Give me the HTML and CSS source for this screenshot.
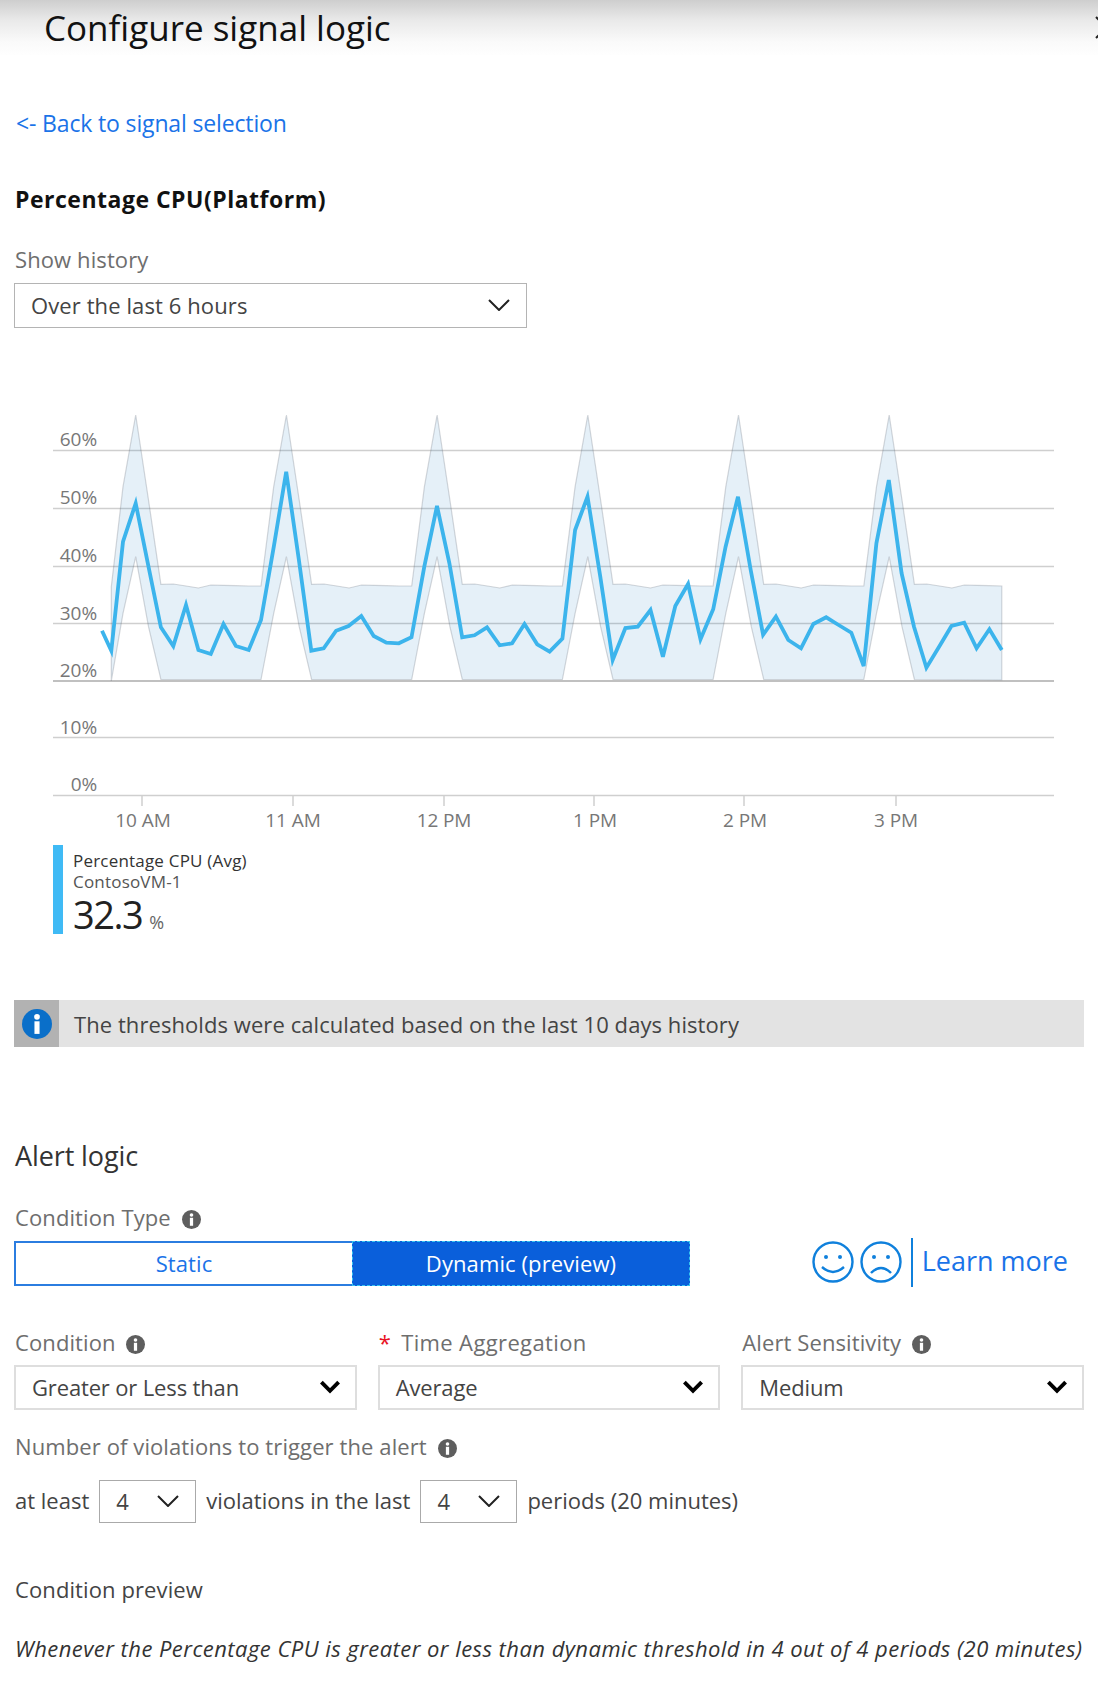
FILE: index.html
```html
<!DOCTYPE html>
<html lang="en">

<head>
    <meta charset="UTF-8">
    <meta name="viewport" content="width=device-width, initial-scale=1.0">
    <title>Configure signal logic</title>
    <link rel="stylesheet" href="styles.css">
</head>

<body>
    <svg class="icon-defs" width="0" height="0">
        <symbol id="info" viewBox="0 0 20 20">
            <circle cx="10" cy="10" r="10" fill="currentColor"></circle>
            <circle cx="10" cy="5.2" r="1.9" fill="#fff"></circle>
            <rect x="8.3" y="8.2" width="3.4" height="8.4" fill="#fff"></rect>
        </symbol>
        <symbol id="chev-thin" viewBox="0 0 22 12">
            <polyline points="1,1 11,11 21,1" fill="none" stroke="currentColor" stroke-width="2"></polyline>
        </symbol>
        <symbol id="chev-bold" viewBox="0 0 20 13">
            <polyline points="2,2 10,10 18,2" fill="none" stroke="currentColor" stroke-width="3.6"></polyline>
        </symbol>
    </svg>

    <header class="blade-header">
        <h1>Configure signal logic</h1>
        <svg class="close-icon" width="24" height="30" viewBox="0 0 24 30">
            <path d="M1 4 L22 25 M22 4 L1 25" stroke="#222" stroke-width="2"></path>
        </svg>
    </header>

    <main class="blade-body">
        <a class="back-link" href="#">&lt;- Back to signal selection</a>
        <h2 class="signal-name">Percentage CPU(Platform)</h2>

        <label class="field-label history-label">Show history</label>
        <div class="select history-select">
            <span>Over the last 6 hours</span>
            <svg class="chev-thin"><use href="#chev-thin"></use></svg>
        </div>

        <svg class="chart" width="1098" height="435" viewBox="0 400 1098 435">
            <g class="grid">
                <line x1="53" x2="1054" y1="450.5" y2="450.5"></line>
                <line x1="53" x2="1054" y1="508.5" y2="508.5"></line>
                <line x1="53" x2="1054" y1="566.5" y2="566.5"></line>
                <line x1="53" x2="1054" y1="623.5" y2="623.5"></line>
                <line x1="53" x2="1054" y1="681" y2="681" class="grid-strong"></line>
                <line x1="53" x2="1054" y1="737.5" y2="737.5"></line>
                <line x1="53" x2="1054" y1="795.5" y2="795.5"></line>
                <line x1="142" x2="142" y1="795" y2="806"></line>
                <line x1="293" x2="293" y1="795" y2="806"></line>
                <line x1="444" x2="444" y1="795" y2="806"></line>
                <line x1="594" x2="594" y1="795" y2="806"></line>
                <line x1="744" x2="744" y1="795" y2="806"></line>
                <line x1="896" x2="896" y1="795" y2="806"></line>
            </g>
            <polygon class="band" points="111.3,586.7 123,486.7 135.7,415 148.5,500 160.9,584.3 173.3,584 186,586 198.4,588 210.8,585 223.5,585.3 235.9,585.7 248.7,586 261,586
                273.7,486.7 286.4,415 299.2,500 311.6,584.3 324,584 336.7,586 349.1,588 361.5,585 374.2,585.3 386.6,585.7 399.4,586 411.7,586
                424.4,486.7 437.1,415 449.9,500 462.3,584.3 474.7,584 487.4,586 499.8,588 512.2,585 524.9,585.3 537.3,585.7 550.1,586 562.4,586
                575.1,486.7 587.8,415 600.6,500 613,584.3 625.4,584 638.1,586 650.5,588 662.9,585 675.6,585.3 688,585.7 700.8,586 713.1,586
                725.8,486.7 738.5,415 751.3,500 763.7,584.3 776.1,584 788.8,586 801.2,588 813.6,585 826.3,585.3 838.7,585.7 851.5,586 863.8,586
                876.5,486.7 889.2,415 902,500 914.4,584.3 926.8,584 939.5,586 951.9,588 964.3,585 977,585.3 989.4,585.7 1001.8,586
                1001.8,680 914.4,679.5 902,626.7 889.2,556.7 876.5,613.3 863.8,679.5
                763.7,679.5 751.3,626.7 738.5,556.7 725.8,613.3 713.1,679.5
                613,679.5 600.6,626.7 587.8,556.7 575.1,613.3 562.4,679.5
                462.3,679.5 449.9,626.7 437.1,556.7 424.4,613.3 411.7,679.5
                311.6,679.5 299.2,626.7 286.4,556.7 273.7,613.3 261,679.5
                160.9,679.5 148.5,626.7 135.7,556.7 123,613.3 111.3,681"></polygon>
            <polyline class="series" points="102,630.7 111.3,650.7 123,541.7 135.7,503.3 148.5,566.7 160.9,627.3 173.3,646 186,605 198.4,650 210.8,654 223.5,624 235.9,646 248.7,650 261,620 273.8,546.7 286.2,471.7 298.9,560 311.3,650.7 323.7,648.3 336.1,630.7 348.5,626 361.3,616 373.7,636 386.4,642.7 398.8,643.3 411.5,637.3 424.3,566.7 437,506 449.4,563.3 462.2,637.3 474.5,635.3 487,627.3 499.7,645.3 512.1,643.3 524.5,624 537.2,644.3 549.6,651.7 562.4,638.7 575.1,530 587.5,496.7 600.3,576.7 612.7,660 625.4,628 637.8,626.7 650.5,610 662.9,656.7 675.3,606 688.1,584 700.5,639.3 713.2,609.3 725.6,546.7 738,496.7 750.7,570 763.1,634.7 775.9,616.7 788.3,640 801,648.3 813.4,624 826.2,617.3 838.6,625 851.3,632.7 863.7,666 876.4,543.3 888.8,480 901.6,573.3 914,626.7 926.4,667.7 939.1,646.7 951.5,626 964.2,622.7 976.6,648.3 989.4,629.3 1001.8,650"></polyline>
            <g class="y-labels">
                <text x="97" y="446">60%</text>
                <text x="97" y="504">50%</text>
                <text x="97" y="562">40%</text>
                <text x="97" y="620">30%</text>
                <text x="97" y="677">20%</text>
                <text x="97" y="734">10%</text>
                <text x="97" y="791">0%</text>
            </g>
            <g class="x-labels">
                <text x="143" y="827">10 AM</text>
                <text x="293" y="827">11 AM</text>
                <text x="444" y="827">12 PM</text>
                <text x="595" y="827">1 PM</text>
                <text x="745" y="827">2 PM</text>
                <text x="896" y="827">3 PM</text>
            </g>
        </svg>

        <div class="legend">
            <div class="legend-bar"></div>
            <div class="legend-text">
                <div class="legend-name">Percentage CPU (Avg)</div>
                <div class="legend-resource">ContosoVM-1</div>
                <div class="legend-value">32.3<small>%</small></div>
            </div>
        </div>

        <div class="notice">
            <div class="notice-icon">
                <svg width="30" height="30"><use href="#info"></use></svg>
            </div>
            <span>The thresholds were calculated based on the last 10 days history</span>
        </div>

        <h3 class="section-title">Alert logic</h3>

        <label class="field-label type-label">Condition Type <svg class="info"><use href="#info"></use></svg></label>
        <div class="type-row">
            <div class="toggle">
                <div class="toggle-item">Static</div>
                <div class="toggle-item active">Dynamic (preview)</div>
            </div>
            <div class="feedback">
                <svg width="42" height="42" viewBox="0 0 42 42" class="face">
                    <circle cx="21" cy="21" r="19.5"></circle>
                    <circle cx="14" cy="16" r="2" class="eye"></circle>
                    <circle cx="28" cy="16" r="2" class="eye"></circle>
                    <path d="M10 26 Q21 36 32 26"></path>
                </svg>
                <svg width="42" height="42" viewBox="0 0 42 42" class="face">
                    <circle cx="21" cy="21" r="19.5"></circle>
                    <circle cx="14" cy="16" r="2" class="eye"></circle>
                    <circle cx="28" cy="16" r="2" class="eye"></circle>
                    <path d="M11 32 Q21 22 31 32"></path>
                </svg>
                <a class="learn-more" href="#">Learn more</a>
            </div>
        </div>

        <div class="fields">
            <div>
                <label class="field-label">Condition <svg class="info"><use href="#info"></use></svg></label>
                <div class="select select-light">
                    <span>Greater or Less than</span>
                    <svg class="chev-bold"><use href="#chev-bold"></use></svg>
                </div>
            </div>
            <div>
                <label class="field-label time-label"><span class="required">*</span>Time Aggregation</label>
                <div class="select select-light">
                    <span>Average</span>
                    <svg class="chev-bold"><use href="#chev-bold"></use></svg>
                </div>
            </div>
            <div>
                <label class="field-label">Alert Sensitivity <svg class="info"><use href="#info"></use></svg></label>
                <div class="select select-light">
                    <span>Medium</span>
                    <svg class="chev-bold"><use href="#chev-bold"></use></svg>
                </div>
            </div>
        </div>

        <label class="field-label violations-label">Number of violations to trigger the alert <svg class="info"><use href="#info"></use></svg></label>
        <div class="violations-row">
            <span>at least</span>
            <div class="select select-small">
                <span>4</span>
                <svg class="chev-thin"><use href="#chev-thin"></use></svg>
            </div>
            <span>violations in the last</span>
            <div class="select select-small">
                <span>4</span>
                <svg class="chev-thin"><use href="#chev-thin"></use></svg>
            </div>
            <span>periods (20 minutes)</span>
        </div>

        <div class="preview-title">Condition preview</div>
        <div class="preview-text">Whenever the Percentage CPU is greater or less than dynamic threshold in 4 out of 4 periods (20 minutes)</div>
    </main>
</body>

</html>
```

FILE: styles.css
```css
* {
    box-sizing: border-box;
}

body {
    margin: 0;
    height: 1686px;
    overflow: hidden;
    background: #fff;
    color: #333;
    font-family: "Open Sans", "Liberation Sans", sans-serif;
    font-size: 22px;
    letter-spacing: 0.1px;
}

.icon-defs {
    display: block;
    height: 0;
}

.blade-header {
    position: relative;
    height: 55px;
    padding-left: 44px;
    background: linear-gradient(#cecece, #e9e9e9 20px, #fafafa 42px, #fff 58px);
}

.blade-header h1 {
    margin: 0;
    font-size: 35px;
    font-weight: 400;
    line-height: 55px;
    color: #111;
    letter-spacing: 0;
}

.close-icon {
    position: absolute;
    top: 13px;
    right: -21px;
}

.blade-body {
    padding: 0 14px;
}

.back-link {
    display: block;
    margin: 53px 0 0 2px;
    font-size: 23px;
    line-height: 30px;
    color: #1a73e8;
    text-decoration: none;
    letter-spacing: -0.15px;
}

.signal-name {
    margin: 46px 0 0 1px;
    font-size: 23px;
    font-weight: 700;
    line-height: 30px;
    color: #111;
    letter-spacing: 0.5px;
}

.field-label {
    display: block;
    margin-left: 1px;
    line-height: 30px;
    color: #6e6e6e;
}

.history-label {
    margin-top: 30px;
}

.select {
    display: flex;
    align-items: center;
    justify-content: space-between;
    height: 45px;
    margin-top: 8px;
    padding: 0 16px 2px 16px;
    border: 1px solid #b4b4b4;
    color: #444;
}

.history-select {
    width: 513px;
    margin-top: 9px;
}

.chev-thin {
    width: 22px;
    height: 12px;
    color: #222;
}

.chev-bold {
    width: 22px;
    height: 14px;
    color: #000;
}

.select-light {
    border: 2px solid #dedede;
    padding-right: 14px;
    letter-spacing: -0.15px;
}

.select-small {
    width: 97px;
    height: 43px;
    margin-top: 0;
    border-color: #aaa;
}

.chart {
    display: block;
    margin: 72px 0 0 -14px;
}

.chart text {
    font-size: 19px;
    fill: #777;
    letter-spacing: -0.1px;
}

.grid line {
    stroke: #cfcfcf;
    stroke-width: 1.5;
}

.grid .grid-strong {
    stroke: #c0c0c0;
    stroke-width: 2;
}

.band {
    fill: rgba(0, 110, 190, 0.1);
    stroke: rgba(90, 100, 110, 0.25);
    stroke-width: 1.2;
}

.series {
    fill: none;
    stroke: #3cb4ec;
    stroke-width: 3.8;
}

.y-labels text {
    text-anchor: end;
}

.x-labels text {
    text-anchor: middle;
}

.legend {
    display: flex;
    gap: 10px;
    height: 89px;
    margin: 10px 0 0 39px;
}

.legend-bar {
    width: 10px;
    background: #3fbaf5;
}

.legend-text {
    padding-top: 5px;
}

.legend-name,
.legend-resource {
    font-size: 17px;
    line-height: 21px;
    letter-spacing: 0.2px;
    color: #333;
}

.legend-resource {
    color: #555;
}

.legend-value {
    font-size: 38px;
    line-height: 44px;
    color: #222;
    letter-spacing: -1.5px;
}

.legend-value small {
    margin-left: 7px;
    font-size: 18px;
    letter-spacing: 0;
    color: #666;
}

.notice {
    display: flex;
    align-items: center;
    height: 47px;
    margin-top: 66px;
    background: #e3e3e3;
    color: #444;
    letter-spacing: 0.07px;
}

.notice-icon {
    display: flex;
    align-items: center;
    justify-content: center;
    width: 45px;
    height: 100%;
    margin-right: 15px;
    background: #b2b2b2;
    color: #0a6fc9;
}

.section-title {
    margin: 91px 0 0 1px;
    font-size: 27px;
    font-weight: 400;
    line-height: 36px;
    color: #333;
    letter-spacing: -0.1px;
}

.type-label {
    margin-top: 28px;
}

.info {
    width: 19px;
    height: 19px;
    margin-left: 5px;
    vertical-align: -3px;
    color: #5e5e5e;
}

.type-row {
    display: flex;
    align-items: center;
    justify-content: space-between;
    height: 45px;
    margin-top: 9px;
}

.toggle {
    display: flex;
    width: 676px;
    height: 100%;
}

.toggle-item {
    flex: 1;
    display: flex;
    align-items: center;
    justify-content: center;
    padding-bottom: 2px;
    border: 2px solid #2b7de0;
    border-right: 0;
    color: #1a73e8;
}

.toggle-item.active {
    background: #0a5fdb;
    border: 1px dashed #35c4f0;
    color: #fff;
}

.feedback {
    display: flex;
    align-items: center;
    height: 49px;
    margin-bottom: 3px;
    padding-right: 16px;
}

.face {
    margin-left: 6px;
    fill: none;
    stroke: #0f80dc;
    stroke-width: 2.4;
}

.face .eye {
    fill: #0f80dc;
    stroke: none;
}

.learn-more {
    height: 100%;
    margin-left: 9px;
    padding-left: 9px;
    border-left: 2px solid #0f80dc;
    font-size: 27px;
    line-height: 46px;
    color: #1a73e8;
    text-decoration: none;
    letter-spacing: 0;
}

.fields {
    display: grid;
    grid-template-columns: repeat(3, 1fr);
    gap: 21px;
    margin-top: 41px;
}

.time-label {
    letter-spacing: 0.37px;
}

.required {
    margin-right: 10px;
    color: #e81123;
}

.violations-label {
    margin-top: 21px;
}

.violations-row {
    display: flex;
    align-items: center;
    gap: 10px;
    margin-top: 19px;
    margin-left: 1px;
    color: #444;
    letter-spacing: 0;
}

.violations-row > span {
    padding-bottom: 3px;
}

.preview-title {
    margin: 51px 0 0 1px;
    line-height: 30px;
    color: #444;
}

.preview-text {
    margin: 29px 0 0 1px;
    line-height: 30px;
    font-style: italic;
    color: #333;
    white-space: nowrap;
    letter-spacing: 0.45px;
}
```
